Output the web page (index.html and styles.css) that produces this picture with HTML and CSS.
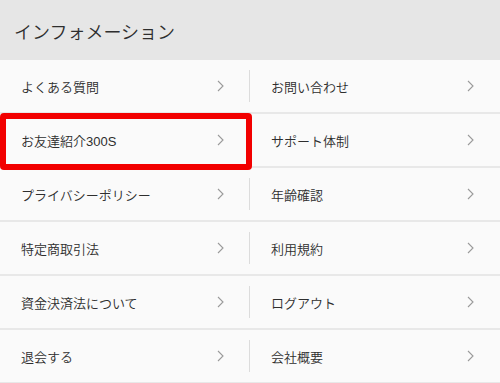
FILE: index.html
```html
<!DOCTYPE html>
<html lang="ja">
<head>
<meta charset="UTF-8">
<title>インフォメーション</title>
<link rel="stylesheet" href="styles.css">
</head>
<body>
<div class="page">
  <div class="head">インフォメーション</div>
  <div class="menu">
    <a class="item left">よくある質問<svg class="chev" viewBox="0 0 7 12"><polyline points="1,1 6,6 1,11"/></svg></a>
    <a class="item right">お問い合わせ<svg class="chev" viewBox="0 0 7 12"><polyline points="1,1 6,6 1,11"/></svg></a>
    <a class="item left mark">お友達紹介300S<svg class="chev" viewBox="0 0 7 12"><polyline points="1,1 6,6 1,11"/></svg></a>
    <a class="item right">サポート体制<svg class="chev" viewBox="0 0 7 12"><polyline points="1,1 6,6 1,11"/></svg></a>
    <a class="item left">プライバシーポリシー<svg class="chev" viewBox="0 0 7 12"><polyline points="1,1 6,6 1,11"/></svg></a>
    <a class="item right">年齢確認<svg class="chev" viewBox="0 0 7 12"><polyline points="1,1 6,6 1,11"/></svg></a>
    <a class="item left">特定商取引法<svg class="chev" viewBox="0 0 7 12"><polyline points="1,1 6,6 1,11"/></svg></a>
    <a class="item right">利用規約<svg class="chev" viewBox="0 0 7 12"><polyline points="1,1 6,6 1,11"/></svg></a>
    <a class="item left">資金決済法について<svg class="chev" viewBox="0 0 7 12"><polyline points="1,1 6,6 1,11"/></svg></a>
    <a class="item right">ログアウト<svg class="chev" viewBox="0 0 7 12"><polyline points="1,1 6,6 1,11"/></svg></a>
    <a class="item left">退会する<svg class="chev" viewBox="0 0 7 12"><polyline points="1,1 6,6 1,11"/></svg></a>
    <a class="item right">会社概要<svg class="chev" viewBox="0 0 7 12"><polyline points="1,1 6,6 1,11"/></svg></a>
  </div>
</div>
</body>
</html>
```

FILE: styles.css
```css
html,body { margin:0; padding:0; height:100%; background:#fafafa; overflow:hidden;
  font-family:"Liberation Sans","Noto Sans CJK JP",sans-serif; font-weight:350; }
.page { width:500px; }
.head { height:60px; background:#e6e6e6; color:#2e2e2e; font-size:18px; padding-left:14px; display:flex; align-items:center; box-sizing:border-box; padding-top:2px; }

.menu { display:grid; grid-template-columns:250px 250px; }
.item { position:relative; height:52px; border-bottom:2px solid #e8e8e8; display:flex; align-items:center; justify-content:space-between;
  font-size:13px; color:#2e2e2e; padding:0 26px 0 21px; }
.item.left::after { content:""; position:absolute; right:0; top:10px; bottom:10px; width:1px; background:#dcdcdc; }
.chev { width:7px; height:12px; fill:none; stroke:#9a9a9a; stroke-width:1.1; }

.item.mark::before { content:""; position:absolute; left:0; top:-1px; width:252px; height:57px; box-sizing:border-box;
  border:6px solid #f20000; border-radius:4px; z-index:2; }
```
